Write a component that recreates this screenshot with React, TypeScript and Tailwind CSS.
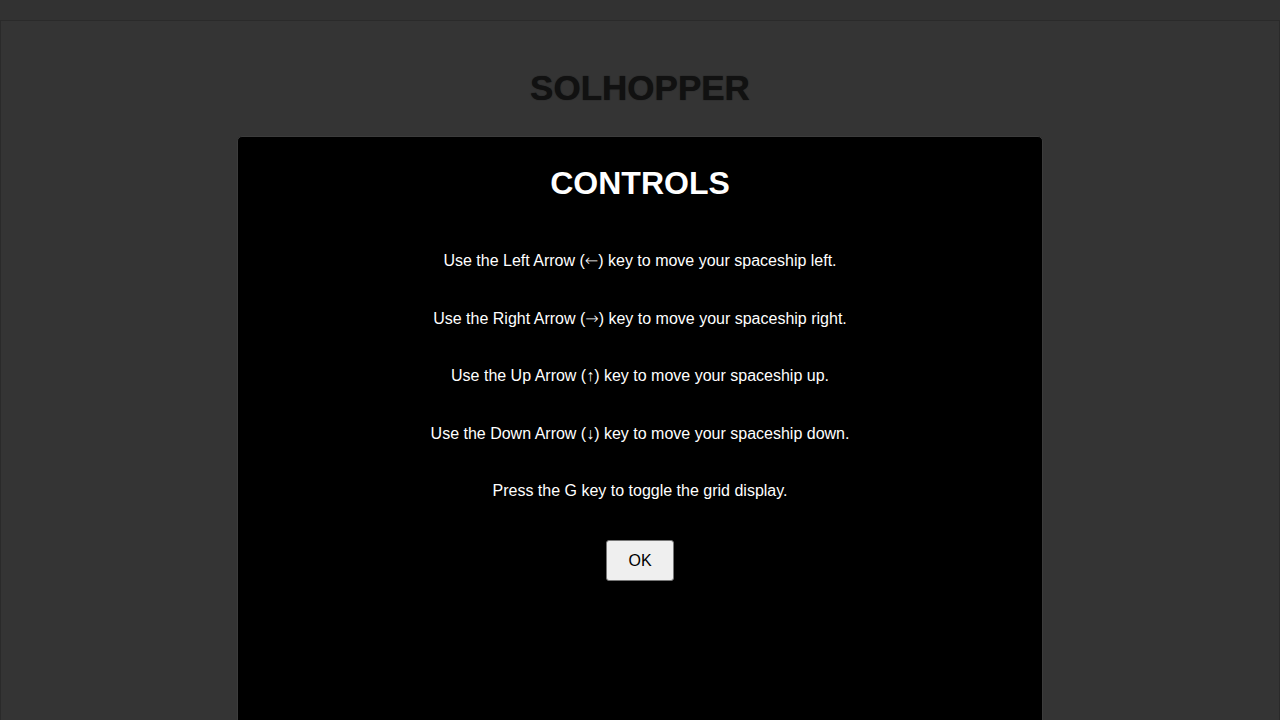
import React from "react";

const lines: [string, string, string, boolean][] = [
  ["Use the Left Arrow (", "\u2190", ") key to move your spaceship left.", true],
  ["Use the Right Arrow (", "\u2192", ") key to move your spaceship right.", true],
  ["Use the Up Arrow (", "\u2191", ") key to move your spaceship up.", false],
  ["Use the Down Arrow (", "\u2193", ") key to move your spaceship down.", false],
  ["Press the G key to toggle the grid display.", "", "", false],
];

export default function App() {
  return (
    <div
      className="min-h-screen bg-[#323232] pt-[20px] overflow-hidden"
      style={{ fontFamily: '"Liberation Sans", Arial, sans-serif' }}
    >
      <div className="border border-[#2a2a2a] bg-[#343434] min-h-[720px] flex flex-col items-center pt-[47px]">
        <h1 className="text-[35px] leading-[40px] font-bold text-[#111111] m-0 [text-shadow:0_0_1px_#111111]">SOLHOPPER</h1>
        <div className="mt-[28px] w-[806px] h-[640px] bg-black rounded-[5px] border border-[#3c3c3c] flex flex-col items-center pt-[28px]">
          <h2 className="text-[32px] leading-[37px] font-bold text-white">CONTROLS</h2>
          <div className="mt-[50px] flex flex-col items-center gap-[39.6px]">
            {lines.map(([a, arrow, b, wide]) => (
              <p key={a} className="text-[16px] leading-[18px] text-white">
                {a}
                {arrow &&
                  (wide ? (
                    <span className="font-['DejaVu_Sans'] text-[16px] font-light">{arrow}</span>
                  ) : (
                    <span>{arrow}</span>
                  ))}
                {b}
              </p>
            ))}
          </div>
          <button className="mt-[40px] w-[68px] h-[41px] bg-[#efefef] border border-[#767676] rounded-[3px] text-[16px] text-black">
            OK
          </button>
        </div>
      </div>
    </div>
  );
}
